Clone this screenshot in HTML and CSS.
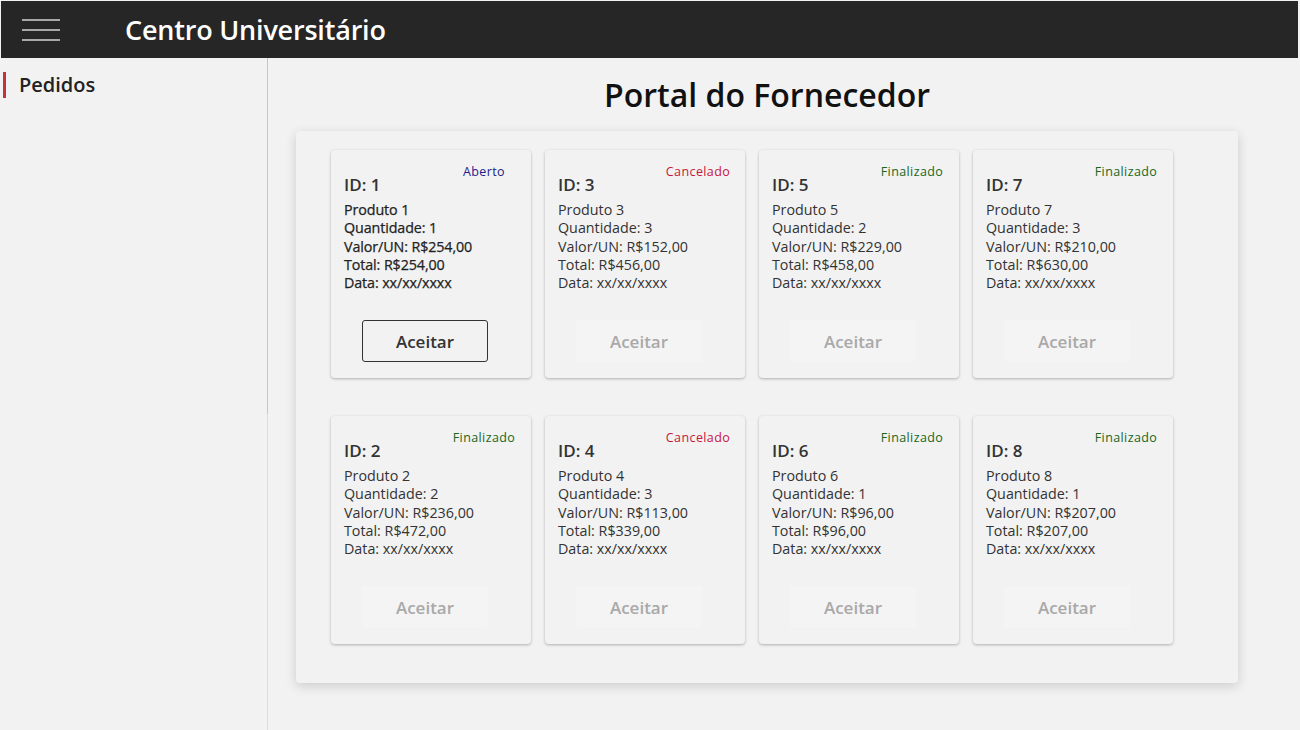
FILE: index.html
```html
<!DOCTYPE html>
<html lang="pt-BR">
<head>
<meta charset="utf-8">
<title>Portal do Fornecedor</title>
<link rel="stylesheet" href="styles.css">
</head>
<body>
<header class="topbar">
  <button class="menu-btn" aria-label="Menu">
    <svg width="38" height="22" viewBox="0 0 38 22"><g stroke="#a8a8a8" stroke-width="2"><line x1="0" y1="1" x2="38" y2="1"/><line x1="0" y1="11" x2="38" y2="11"/><line x1="0" y1="21" x2="38" y2="21"/></g></svg>
  </button>
  <h1 class="brand">Centro Universitário</h1>
</header>
<div class="layout">
  <aside class="sidebar">
    <nav class="side-nav">
      <a class="side-item active">Pedidos</a>
    </nav>
  </aside>
  <main class="main">
    <div class="content">
      <h2 class="page-title">Portal do Fornecedor</h2>
      <section class="panel">
        <div class="grid">
          <article class="card open">
            <span class="status aberto">Aberto</span>
            <h3 class="card-id">ID: 1</h3>
            <ul class="info">
              <li>Produto 1</li><li>Quantidade: 1</li><li>Valor/UN: R$254,00</li><li>Total: R$254,00</li><li>Data: xx/xx/xxxx</li>
            </ul>
            <button class="accept">Aceitar</button>
          </article>
          <article class="card">
            <span class="status cancelado">Cancelado</span>
            <h3 class="card-id">ID: 3</h3>
            <ul class="info">
              <li>Produto 3</li><li>Quantidade: 3</li><li>Valor/UN: R$152,00</li><li>Total: R$456,00</li><li>Data: xx/xx/xxxx</li>
            </ul>
            <button class="accept" disabled>Aceitar</button>
          </article>
          <article class="card">
            <span class="status finalizado">Finalizado</span>
            <h3 class="card-id">ID: 5</h3>
            <ul class="info">
              <li>Produto 5</li><li>Quantidade: 2</li><li>Valor/UN: R$229,00</li><li>Total: R$458,00</li><li>Data: xx/xx/xxxx</li>
            </ul>
            <button class="accept" disabled>Aceitar</button>
          </article>
          <article class="card">
            <span class="status finalizado">Finalizado</span>
            <h3 class="card-id">ID: 7</h3>
            <ul class="info">
              <li>Produto 7</li><li>Quantidade: 3</li><li>Valor/UN: R$210,00</li><li>Total: R$630,00</li><li>Data: xx/xx/xxxx</li>
            </ul>
            <button class="accept" disabled>Aceitar</button>
          </article>
          <article class="card">
            <span class="status finalizado">Finalizado</span>
            <h3 class="card-id">ID: 2</h3>
            <ul class="info">
              <li>Produto 2</li><li>Quantidade: 2</li><li>Valor/UN: R$236,00</li><li>Total: R$472,00</li><li>Data: xx/xx/xxxx</li>
            </ul>
            <button class="accept" disabled>Aceitar</button>
          </article>
          <article class="card">
            <span class="status cancelado">Cancelado</span>
            <h3 class="card-id">ID: 4</h3>
            <ul class="info">
              <li>Produto 4</li><li>Quantidade: 3</li><li>Valor/UN: R$113,00</li><li>Total: R$339,00</li><li>Data: xx/xx/xxxx</li>
            </ul>
            <button class="accept" disabled>Aceitar</button>
          </article>
          <article class="card">
            <span class="status finalizado">Finalizado</span>
            <h3 class="card-id">ID: 6</h3>
            <ul class="info">
              <li>Produto 6</li><li>Quantidade: 1</li><li>Valor/UN: R$96,00</li><li>Total: R$96,00</li><li>Data: xx/xx/xxxx</li>
            </ul>
            <button class="accept" disabled>Aceitar</button>
          </article>
          <article class="card">
            <span class="status finalizado">Finalizado</span>
            <h3 class="card-id">ID: 8</h3>
            <ul class="info">
              <li>Produto 8</li><li>Quantidade: 1</li><li>Valor/UN: R$207,00</li><li>Total: R$207,00</li><li>Data: xx/xx/xxxx</li>
            </ul>
            <button class="accept" disabled>Aceitar</button>
          </article>
        </div>
      </section>
    </div>
  </main>
</div>
</body>
</html>
```
FILE: styles.css
```css
html {
  background: #f2f2f2;
}
body {
  margin: 1px 2px 0 1px;
  height: 729px;
  overflow: hidden;
  background: #f2f2f2;
  font-family: "Open Sans", "Noto Sans", sans-serif;
  color: #333;
  display: flex;
  flex-direction: column;
}
.topbar {
  height: 57px;
  flex: none;
  background: #262626;
  display: flex;
  align-items: center;
}
.menu-btn {
  background: none;
  border: 0;
  padding: 0;
  margin-left: 21px;
  width: 38px;
  height: 22px;
  display: flex;
}
.brand {
  margin: 0 0 0 65px;
  font-size: 27px;
  font-weight: 600;
  color: #fff;
  letter-spacing: -0.2px;
}
.layout {
  flex: 1;
  display: flex;
}
.sidebar {
  width: 266px;
  flex: none;
  border-right: 1px solid #dedede;
  background: #f2f2f2;
}
.side-nav {
  height: 356px;
  box-shadow: 1px 0 0 #c6c6c6;
  padding-top: 14px;
  box-sizing: border-box;
}
.side-item {
  display: block;
  border-left: 3px solid #c4323c;
  margin-left: 2px;
  padding-left: 13px;
  font-size: 20px;
  font-weight: 600;
  line-height: 26px;
  color: #222;
}
.main {
  flex: 1;
  padding-left: 28px;
}
.content {
  width: 942px;
}
.page-title {
  margin: 16px 0 15px;
  text-align: center;
  font-size: 32px;
  font-weight: 600;
  line-height: 42px;
  color: #111;
}
.panel {
  background: #f2f2f2;
  border-radius: 4px;
  box-shadow: 0 3px 12px rgba(0, 0, 0, 0.16);
  padding: 19px 35px 39px;
}
.grid {
  display: grid;
  grid-template-columns: repeat(4, 200px);
  column-gap: 14px;
  row-gap: 38px;
}
.card {
  position: relative;
  background: #f2f2f2;
  border-radius: 4px;
  box-shadow: 0 1px 3px rgba(0, 0, 0, 0.28);
  padding: 23px 13px 16px;
  height: 228px;
  box-sizing: border-box;
}
.status {
  position: absolute;
  top: 13px;
  left: 112px;
  width: 82px;
  text-align: center;
  font-size: 12.5px;
  line-height: 18px;
  letter-spacing: 0.4px;
}
.aberto { color: #1c1c8c; }
.cancelado { color: #c8163a; }
.finalizado { color: #17671a; }
.card-id {
  margin: 0;
  font-size: 17px;
  font-weight: 600;
  line-height: 24px;
  color: #333;
}
.info {
  list-style: none;
  margin: 4px 0 0;
  padding: 0;
  font-size: 14.3px;
  line-height: 18.3px;
  color: #333;
}
.card.open .info {
  color: #222;
  -webkit-text-stroke: 0.25px #222;
  letter-spacing: -0.1px;
}
.accept {
  display: block;
  margin: 28px 0 0 18px;
  width: 126px;
  height: 42px;
  border: 1px solid #333;
  border-radius: 3px;
  background: #f2f2f2;
  font-family: "Open Sans", sans-serif;
  font-size: 17px;
  font-weight: 600;
  color: #333;
}
.accept:disabled {
  border-color: transparent;
  background: #f4f4f4;
  color: #a9a9a9;
}
```
